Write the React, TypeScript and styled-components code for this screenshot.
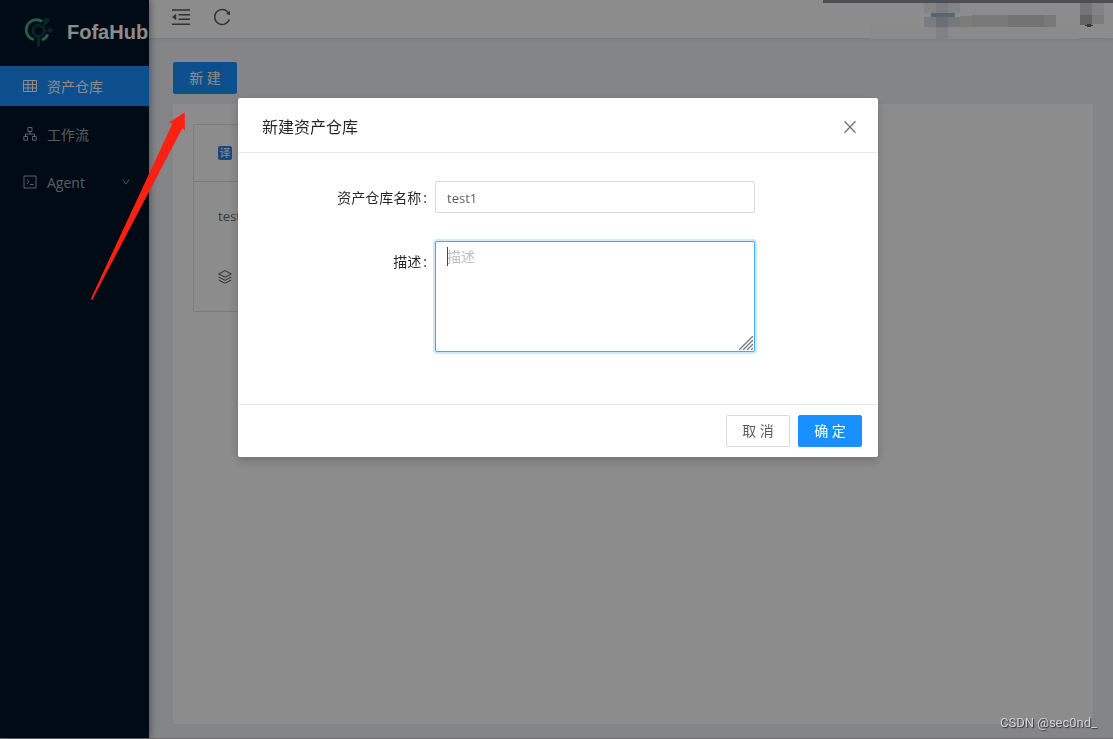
import React from "react";
import styled, { createGlobalStyle } from "styled-components";
import { AiOutlineDown, AiOutlineReload } from "react-icons/ai";

const GlobalStyle = createGlobalStyle`
  *, *::before, *::after { box-sizing: border-box; }
  body {
    margin: 0;
    font-family: "Open Sans", "Noto Sans CJK SC", sans-serif;
    font-size: 14px;
    line-height: 21px;
    color: rgba(0, 0, 0, 0.65);
    background: #f0f2f5;
  }
  button, input, textarea { font-family: inherit; }
`;

const Layout = styled.div`
  display: flex;
  min-height: 100vh;
  border-bottom: 1px solid #c8c4c8;
`;

const Sider = styled.aside`
  position: relative;
  z-index: 1;
  flex: 0 0 149px;
  overflow-x: clip;
  overflow-clip-margin: 12px;
  background: #001529;
  box-shadow: 2px 0 6px rgba(0, 21, 41, 0.35);
`;

const Brand = styled.a`
  display: flex;
  align-items: center;
  gap: 14px;
  height: 66px;
  padding: 0 0 2px 25px;
  color: #fff;
  font: bold 20px/24px "Liberation Sans", Arial, sans-serif;
  text-decoration: none;
  white-space: nowrap;
`;

const Menu = styled.nav`
  display: flex;
  flex-direction: column;
  gap: 8px;
`;

const MenuItem = styled.a<{ $active?: boolean }>`
  display: flex;
  align-items: center;
  gap: 10px;
  height: 40px;
  padding: 0 18px 0 23px;
  color: ${(p) => (p.$active ? "#fff" : "rgba(255, 255, 255, 0.65)")};
  background: ${(p) => (p.$active ? "#1890ff" : "transparent")};
  text-decoration: none;
`;

const MenuText = styled.span`
  flex: 1;
`;

const Main = styled.div`
  flex: 1;
  min-width: 0;
  display: flex;
  flex-direction: column;
`;

const Header = styled.header`
  display: flex;
  align-items: center;
  gap: 21px;
  height: 38px;
  padding-left: 22px;
  background: #fff;
  box-shadow: 0 1px 4px rgba(0, 21, 41, 0.12);
`;

const IconButton = styled.button`
  display: flex;
  padding: 0;
  margin-bottom: 4px;
  border: 0;
  background: none;
  color: rgba(0, 0, 0, 0.65);
  cursor: pointer;
`;

const Account = styled.div`
  align-self: flex-start;
  height: 38px;
  margin-left: auto;
`;

const Content = styled.main`
  flex: 1;
  display: flex;
  flex-direction: column;
  align-items: flex-start;
  gap: 10px;
  padding: 24px 20px 14px 24px;
`;

const Button = styled.button<{ $primary?: boolean }>`
  min-width: 64px;
  height: 32px;
  padding: 0 15px;
  border: 1px solid ${(p) => (p.$primary ? "#1890ff" : "#d9d9d9")};
  border-radius: 2px;
  background: ${(p) => (p.$primary ? "#1890ff" : "#fff")};
  color: ${(p) => (p.$primary ? "#fff" : "rgba(0, 0, 0, 0.65)")};
  font-size: 14px;
  line-height: 28px;
  white-space: nowrap;
  cursor: pointer;
`;

const Panel = styled.section`
  flex: 1;
  align-self: stretch;
  padding: 20px;
  background: #fff;
`;

const Card = styled.article`
  width: 300px;
  border: 1px solid #e0e0e0;
  border-radius: 2px;
`;

const CardHead = styled.div`
  display: flex;
  align-items: center;
  height: 57px;
  padding: 0 24px;
  border-bottom: 1px solid #e0e0e0;
`;

const Badge = styled.span`
  width: 14px;
  height: 14px;
  border-radius: 2px;
  background: #3380ec;
  color: #fff;
  font-size: 11px;
  line-height: 13px;
  text-align: center;
`;

const CardBody = styled.div`
  display: flex;
  flex-direction: column;
  gap: 39px;
  padding: 24px;
  font-size: 13px;
`;

const CardMeta = styled.div`
  display: flex;
  align-items: center;
  gap: 8px;
  height: 21px;
`;

const Mask = styled.div`
  position: fixed;
  inset: 0;
  z-index: 10;
  display: flex;
  justify-content: center;
  align-items: flex-start;
  padding: 98px 0 0 3px;
  background: rgba(0, 0, 0, 0.45);
`;

const Dialog = styled.form`
  width: 640px;
  border-radius: 2px;
  background: #fff;
  box-shadow: 0 4px 12px rgba(0, 0, 0, 0.2);
`;

const DialogHead = styled.div`
  display: flex;
  justify-content: space-between;
  align-items: center;
  height: 55px;
  padding: 3px 21px 0 24px;
  border-bottom: 1px solid #e8e8e8;
`;

const DialogTitle = styled.h1`
  margin: 0;
  color: rgba(0, 0, 0, 0.85);
  font-size: 16px;
  font-weight: 400;
  line-height: 22px;
`;

const CloseButton = styled(IconButton)`
  margin: 0;
  color: rgba(0, 0, 0, 0.55);
`;

const DialogBody = styled.div`
  display: flex;
  flex-direction: column;
  gap: 28px;
  padding: 28px 24px 52px;
`;

const Field = styled.div`
  display: grid;
  grid-template-columns: 165px 320px;
  column-gap: 8px;
`;

const Label = styled.label<{ $multi?: boolean }>`
  padding-top: ${(p) => (p.$multi ? "10px" : "6px")};
  color: rgba(0, 0, 0, 0.85);
  text-align: right;

  &::after {
    content: ":";
    margin-left: 2px;
  }
`;

const TextInput = styled.input`
  height: 32px;
  padding: 2px 11px 0;
  border: 1px solid #d9d9d9;
  border-radius: 2px;
  outline: 0;
  color: rgba(0, 0, 0, 0.65);
  font-size: 13px;
`;

const AreaBox = styled.div`
  position: relative;
  display: flex;
`;

const Area = styled.textarea`
  flex: 1;
  height: 111px;
  padding: 4px 11px;
  border: 1px solid #40a9ff;
  border-radius: 2px;
  outline: 0;
  box-shadow: 0 0 0 2px rgba(24, 144, 255, 0.2);
  font-size: 14px;
  line-height: 21px;
  resize: none;

  &::placeholder { color: #bfbfbf; }
`;

const Caret = styled.span`
  position: absolute;
  top: 6px;
  left: 12px;
  width: 1px;
  height: 19px;
  background: #444;
`;

const Grip = styled.svg`
  position: absolute;
  right: 2px;
  bottom: 2px;
`;

const DialogFoot = styled.div`
  display: flex;
  justify-content: flex-end;
  gap: 8px;
  padding: 10px 16px;
  border-top: 1px solid #e8e8e8;
`;

const Pointer = styled.svg`
  position: absolute;
  top: 112px;
  left: 90px;
  z-index: 20;
  pointer-events: none;
`;

const Watermark = styled.span`
  position: fixed;
  right: 16px;
  bottom: 8px;
  z-index: 20;
  color: #d4d4d4;
  font: 13px/16px Roboto, sans-serif;
  text-shadow: 1px 1px 1px #333;
`;

const Logo = () => (
  <svg width="28" height="32" viewBox="0 0 30 34" fill="none" aria-hidden="true">
    <path d="M18.500 6A10.800 10.800 0 1 0 9.500 25.200" stroke="#3fae8a" strokeWidth="3" />
    <path d="M18 25.600a11 11 0 0 0 6.400-6" stroke="#3fae8a" strokeWidth="3" />
    <circle cx="14.500" cy="15.500" r="6" stroke="#0a4a48" strokeWidth="2.800" />
    <path d="M14.500 22v11" stroke="#0a4a48" strokeWidth="3.200" />
    <path d="M19 11l3-3.500M21 15.500h5" stroke="#0a4a48" strokeWidth="1.500" />
    <path d="M21 1l6.500 3.500-4.500 4.500-3-1z" fill="#0a4a48" />
    <circle cx="27" cy="15.500" r="2.400" fill="#0a4a48" />
  </svg>
);

const TableIcon = () => (
  <svg width="14" height="14" viewBox="0 0 14 14" fill="none" stroke="currentColor" aria-hidden="true">
    <path d="M.5 1.500h13v11H.5zM.5 5.500h13M.5 9h13M5 1.500v11M9.500 1.500v11" />
  </svg>
);

const WorkflowIcon = () => (
  <svg width="14" height="14" viewBox="0 0 14 14" fill="none" stroke="currentColor" aria-hidden="true">
    <path d="M5 .5h4v4H5zM.8 9.500h3.700v3.700H.8zM9.500 9.500h3.700v3.700H9.500zM7 4.500V7M2.500 9.500V7h9v2.500" />
  </svg>
);

const TerminalIcon = () => (
  <svg width="14" height="14" viewBox="0 0 14 14" fill="none" stroke="currentColor" aria-hidden="true">
    <path d="M1 1h12v12H1zM3.800 4.500L6 6.700 3.800 9M7 9.500h3.500" />
  </svg>
);

const FoldIcon = () => (
  <svg width="20" height="20" viewBox="0 0 20 20" fill="none" stroke="currentColor" strokeWidth="1.600" aria-hidden="true">
    <path d="M1 3h18M7.500 7.800H19M7.500 12.300H19M1 17.200h18" />
    <path d="M1 10l4.200-3.200v6.400z" fill="currentColor" stroke="none" />
  </svg>
);

const CloseIcon = () => (
  <svg width="14" height="14" viewBox="0 0 14 14" fill="none" stroke="currentColor" strokeWidth="1.300" aria-hidden="true">
    <path d="M1.500 1.200l11 11.600M12.500 1.200l-11 11.600" />
  </svg>
);

const LayersIcon = () => (
  <svg width="14" height="14" viewBox="0 0 14 14" fill="none" stroke="currentColor" aria-hidden="true">
    <path d="M7 .6l6.300 3.300L7 7.200.7 3.900zM.7 7L7 10.300 13.300 7M.7 10L7 13.300l6.300-3.300" />
  </svg>
);

const mosaic: [number, number, number, number, string][] = [
  [0, 0, 290, 3, "#8f8f99"],
  [47, 27, 209, 12, "#fbfbfb"],
  [101, 3, 12, 10, "#edf0f5"],
  [113, 3, 12, 10, "#dfe2ea"],
  [125, 3, 12, 10, "#eceff6"],
  [101, 17, 12, 10, "#dce3ef"],
  [113, 17, 12, 10, "#c4cad5"],
  [125, 17, 12, 10, "#d5dde6"],
  [108, 13, 24, 4, "#a8b6cc"],
  [113, 27, 12, 12, "#ebecf0"],
  [137, 16, 12, 11, "#e2e2dd"],
  [149, 15, 36, 12, "#dcdcdc"],
  [185, 15, 36, 12, "#d2d2d2"],
  [221, 15, 12, 12, "#d8dcda"],
  [257, 3, 12, 12, "#d6d6d6"],
  [269, 3, 12, 12, "#eeeeee"],
  [257, 15, 12, 10, "#b4b4b4"],
  [269, 15, 12, 9, "#e1e1e1"],
];

const AccountMosaic = () => (
  <svg width="290" height="39" viewBox="0 0 290 39" shapeRendering="crispEdges" aria-hidden="true">
    {mosaic.map(([x, y, w, h, fill]) => (
      <rect key={`${x}-${y}`} x={x} y={y} width={w} height={h} fill={fill} />
    ))}
    <ellipse cx="266" cy="25.500" rx="4" ry="1.200" fill="#666" />
  </svg>
);

export default function App() {
  return (
    <>
      <GlobalStyle />
      <Layout>
        <Sider>
          <Brand href="#">
            <Logo />
            FofaHub
          </Brand>
          <Menu>
            <MenuItem href="#assets" $active>
              <TableIcon />
              <MenuText>资产仓库</MenuText>
            </MenuItem>
            <MenuItem href="#workflow">
              <WorkflowIcon />
              <MenuText>工作流</MenuText>
            </MenuItem>
            <MenuItem href="#agent">
              <TerminalIcon />
              <MenuText>Agent</MenuText>
              <AiOutlineDown size={10} />
            </MenuItem>
          </Menu>
        </Sider>
        <Main>
          <Header>
            <IconButton type="button" aria-label="收起菜单">
              <FoldIcon />
            </IconButton>
            <IconButton type="button" aria-label="刷新">
              <AiOutlineReload size={20} />
            </IconButton>
            <Account>
              <AccountMosaic />
            </Account>
          </Header>
          <Content>
            <Button type="button" $primary>新 建</Button>
            <Panel>
              <Card>
                <CardHead>
                  <Badge>译</Badge>
                </CardHead>
                <CardBody>
                  <span>test</span>
                  <CardMeta>
                    <LayersIcon />
                  </CardMeta>
                </CardBody>
              </Card>
            </Panel>
          </Content>
        </Main>
      </Layout>
      <Mask>
        <Dialog role="dialog" aria-labelledby="dialog-title" onSubmit={(e) => e.preventDefault()}>
          <DialogHead>
            <DialogTitle id="dialog-title">新建资产仓库</DialogTitle>
            <CloseButton type="button" aria-label="关闭">
              <CloseIcon />
            </CloseButton>
          </DialogHead>
          <DialogBody>
            <Field>
              <Label htmlFor="name">资产仓库名称</Label>
              <TextInput id="name" defaultValue="test1" />
            </Field>
            <Field>
              <Label htmlFor="description" $multi>描述</Label>
              <AreaBox>
                <Area id="description" placeholder="描述" />
                <Caret />
                <Grip width="14" height="14" viewBox="0 0 14 14" stroke="#777" strokeWidth="1.300" aria-hidden="true">
                  <path d="M0 14L14 0M4 14L14 4M8 14l6-6M12 14l2-2" />
                </Grip>
              </AreaBox>
            </Field>
          </DialogBody>
          <DialogFoot>
            <Button type="button">取 消</Button>
            <Button type="submit" $primary>确 定</Button>
          </DialogFoot>
        </Dialog>
      </Mask>
      <Pointer width="96" height="189" viewBox="0 0 96 189" aria-hidden="true">
        <path d="M94.700 .5L79 10.500 82.500 11.500 .8 187 2.200 188 92.500 16 95 18.800z" fill="#ff2014" />
      </Pointer>
      <Watermark>CSDN @sec0nd_</Watermark>
    </>
  );
}
